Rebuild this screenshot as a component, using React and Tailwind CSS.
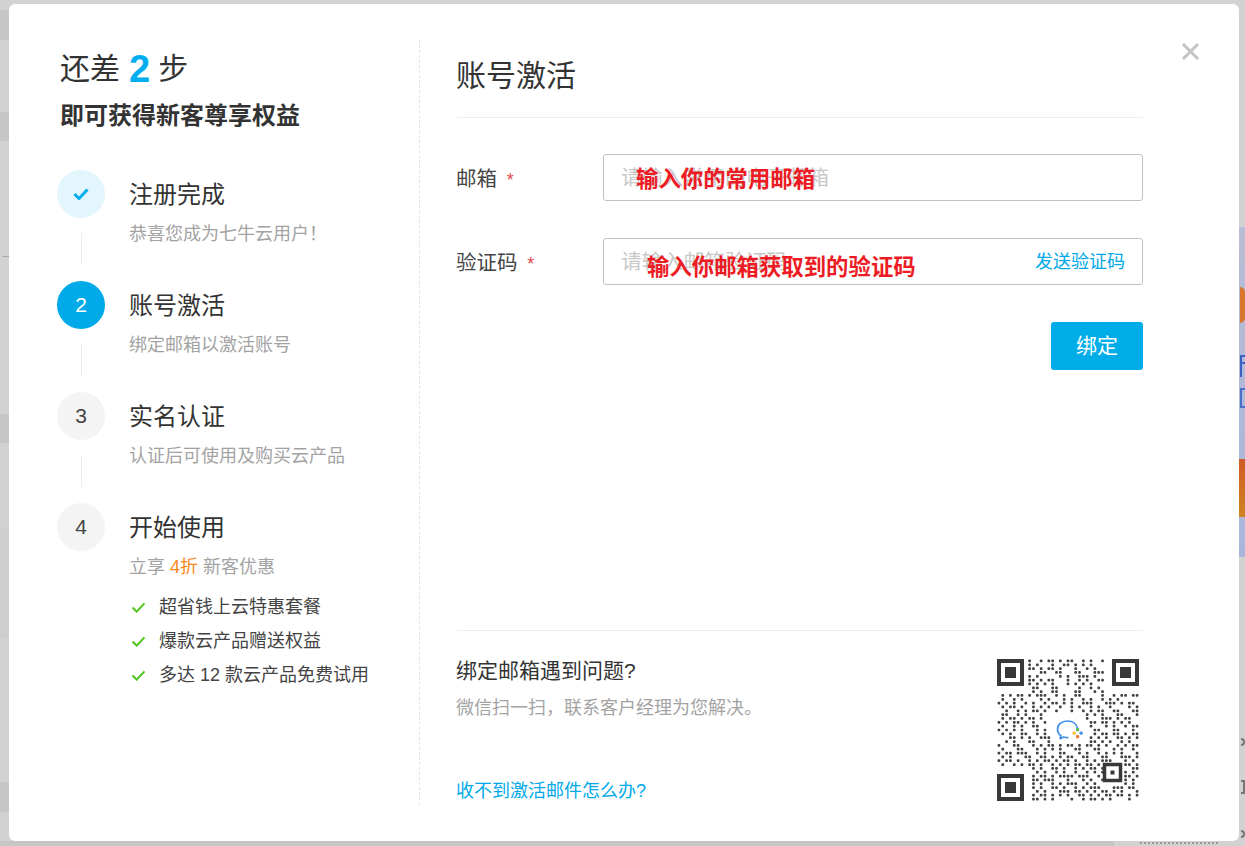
const QR_ROWS = [
  '........#.##.####.##..#.##.#.........',
  '........#.#...#..##.###.#.#..........',
  '........##.#.##.#...#.##.#.#.........',
  '........#..###.##.#.##.#.###.........',
  '........#.#.....#.##.###.#...........',
  '........##.#.##...#..#.#..##.........',
  '........#.#.#.#.#.#.#.#.#.#..........',
  '.........##.#.##.#...##.#.##.........',
  '........##.#.###..#.##.#.#.#.........',
  '.#.#.##.#####.##.#.###..#..#.##.##.##',
  '.#..#.#...##.#.#.#.##.#.##.#.#.#...#.',
  '#.#.#.##.#.##.####.#.####.#.###.#.###',
  '.#.##.#..#.#.#..#..#.##.#.##.#..#.#.#',
  '..##.#.####.##.#...#..#.#.###.##.#.##',
  '.##.##.#.#.#.........#.###.#.#.##.#.#',
  '.#.##.#.##.#.........###.#.###.#.##..',
  '#.#.##.#.#.##........#..##.##.#.#.#.#',
  '.##.#.##.##.#.........#.#..##.#.##.##',
  '#.#.#.#...#.#.........##.##.#.##.#.#.',
  '.#.##.##.##.#.........#.##.##.##.#.##',
  '#..##.#.#.####.......##.#.#.#..##.#.#',
  '.##.#.#.##.#.##.#.##.##.##.#.#.##.#..',
  '#.#.##.#.#.####.#.##.#.##.###..#.#.##',
  '.#.#.##.#.#.###.#.#.##.#.##.#.#.##.#.',
  '#.##.###.##.#.#.##.#.#.##.#.###.#.#.#',
  '.#.#.#.##.###.#.#.###.##.#.##.#.###.#',
  '#.##.##.#.#.##.#.##.##.#.#####.#.#.##',
  '.#..#.#.##.##.#.#.#.##.##.#.#.##.##.#',
  '.........#.#.###.##.#.#.##.#.....#.##',
  '.........##.#.##.#.##..#.#.#.....#.#.',
  '.........#.##.#.####.###.##......##.#',
  '.........##.###.#.#...#.#.##.....#.##',
  '.........#.##.#.#.###.##.#.#.....#.#.',
  '.........#.#.###.#..#.#.###.#.###.##.',
  '.........##.#.#.###.##.#.#.##.#.#.#.#',
  '.........#.##.#.#.#.###.#.#.##.##.#.#',
  '.........##.#.#.#..#.##.##.#.#.#..#.#',
]

function QrCode() {
  const m = 142 / 37
  const dots = []
  QR_ROWS.forEach((row, y) => {
    row.split('').forEach((c, x) => {
      // keep the middle clear for the logo, thin the rest a little
      const inLogo = x >= 14 && x <= 22 && y >= 14 && y <= 21
      const thin = (x * 7 + y * 13) % 5 === 0
      if (c === '#' && !inLogo && !thin) {
        dots.push(<rect key={`${x}-${y}`} x={x * m + 0.55} y={y * m + 0.55} width={m - 1.1} height={m - 1.1} rx="1" fill="#404040" />)
      }
    })
  })
  const finders = [[0, 0], [142 - 27, 0], [0, 142 - 27]]
  return (
    <svg width="142" height="142" viewBox="0 0 142 142" className="block">
      {dots}
      {finders.map(([x, y]) => (
        <g key={`${x}-${y}`}>
          <rect x={x + 2} y={y + 2} width="23" height="23" fill="none" stroke="#383838" strokeWidth="4" />
          <rect x={x + 8} y={y + 8} width="11" height="11" fill="#383838" />
        </g>
      ))}
      <rect x="107.5" y="105.5" width="16" height="16" fill="#fff" stroke="#383838" strokeWidth="3.5" />
      <rect x="113.5" y="111.5" width="4" height="4" fill="#383838" />
      {/* chat logo */}
      <path d="M81 70.5c-1-5.5-5.5-8.5-10.5-8.5-6 0-10 3.7-10 8.5 0 2.6 1.3 4.7 3.3 6.2l-.6 3 3.4-1.7c1.3.4 2.6.6 4.1.6" fill="none" stroke="#3f8fe8" strokeWidth="1.7" strokeLinecap="round" strokeLinejoin="round" />
      <rect x="75.5" y="72.5" width="3.2" height="3.2" rx="1" fill="#f5c33b" />
      <rect x="79" y="69" width="3.2" height="3.2" rx="1" fill="#5cb85c" />
      <rect x="82.5" y="72.5" width="3.2" height="3.2" rx="1" fill="#4a90e2" />
      <rect x="79" y="76" width="3.2" height="3.2" rx="1" fill="#ee7b3c" />
    </svg>
  )
}

function Check({ color, width = 16, height = 12, weight = 2.2 }) {
  return (
    <svg width={width} height={height} viewBox="0 0 16 12" fill="none">
      <path d="M1.5 6l4.5 4.5L14.5 1.5" stroke={color} strokeWidth={weight} />
    </svg>
  )
}

function Step({ badge, badgeClass, title, desc, line = true, children }) {
  return (
    <div className="flex">
      <div className="w-[48px] mr-[24px] shrink-0 flex flex-col items-center">
        <div className={`w-[48px] h-[48px] rounded-full flex items-center justify-center text-[21px] ${badgeClass}`}>{badge}</div>
        {line && <div className="w-px h-[32px] mt-[15px] mb-[16px] bg-[#ececec]" />}
      </div>
      <div>
        <div className="text-[24px] leading-[50px] text-[#333]">{title}</div>
        <div className="-mt-px text-[18px] leading-[30px] text-[#a3a3a3]">{desc}</div>
        {children}
      </div>
    </div>
  )
}

function Field({ label, placeholder, note, noteClass, action, className }) {
  return (
    <div className={`flex items-center ${className}`}>
      <label className="w-[146px] shrink-0 -ml-px mr-px pt-[3px] text-[20.5px] text-[#444]">
        {label} <span className="text-[#e5484d] text-[18px] ml-[4px]">*</span>
      </label>
      <div className="relative flex-1 h-[47px] border border-[#c2c2c2] rounded-[3px] flex items-center pl-[17px] pr-[17px]">
        <input placeholder={placeholder} className="flex-1 min-w-0 outline-none text-[20.8px] placeholder:text-[#c8c8c8]" />
        {action && <span className="pt-px text-[18px] text-[#00a9e8]">{action}</span>}
        <span className={`absolute text-[22.4px] leading-[32px] font-bold text-[#ed1c24] ${noteClass}`}>{note}</span>
      </div>
    </div>
  )
}

export default function App() {
  return (
    <div className="relative h-[846px] w-[1245px] overflow-hidden bg-[#d2d2d2] pt-[4px] pl-[9px] font-['Liberation_Sans','Noto_Sans_CJK_SC',sans-serif]">
      {/* page behind the overlay, only its edges show */}
      <div className="absolute left-0 top-[10px] w-[9px] h-[30px] bg-[#c6c6c6]" />
      <div className="absolute left-0 top-[112px] w-[9px] h-[29px] bg-[#c6c6c6]" />
      <div className="absolute left-[2px] top-[256px] w-[7px] h-px bg-[#a8a8a8]" />
      <div className="absolute left-0 top-[414px] w-[9px] h-[29px] bg-[#c6c6c6]" />
      <div className="absolute left-0 top-[528px] w-[9px] h-[110px] bg-[#cecece]" />
      <div className="absolute left-0 top-[782px] w-[9px] h-[30px] bg-[#c6c6c6]" />
      <div className="absolute right-0 top-[227px] w-[6px] h-[330px] bg-gradient-to-b from-[#b7bdd4] to-[#a9b6dc]" />
      <div className="absolute right-0 top-[287px] w-[5px] h-[36px] rounded-r-full bg-[#d9772f]" />
      <div className="absolute right-0 top-[355px] w-[5px] h-[2px] bg-[#3d62c4]" />
      <div className="absolute right-0 top-[362px] w-[5px] h-[2px] bg-[#3d62c4]" />
      <div className="absolute right-[3px] top-[355px] w-[2px] h-[22px] bg-[#3d62c4]" />
      <div className="absolute right-0 top-[388px] w-[5px] h-[2px] bg-[#4a6fc8]" />
      <div className="absolute right-[3px] top-[388px] w-[2px] h-[20px] bg-[#4a6fc8]" />
      <div className="absolute right-0 top-[406px] w-[5px] h-[2px] bg-[#4a6fc8]" />
      <div className="absolute right-0 top-[459px] w-[6px] h-[58px] bg-gradient-to-b from-[#cf5a25] to-[#d08420]" />
      <div className="absolute right-0 top-[738px] w-[4px] h-[8px] rounded-r-full border-2 border-l-0 border-[#777]" />
      <div className="absolute right-0 top-[780px] w-[4px] h-[14px] border-2 border-l-0 border-[#777]" />
      <div className="absolute right-0 top-[830px] w-[4px] h-[8px] rounded-r-full border-2 border-l-0 border-[#777]" />
      <div className="absolute left-0 top-[841px] w-[1114px] h-[5px] bg-[#c6c6c6]" />
      <div className="absolute left-[1140px] top-[842px] w-[78px] border-t-2 border-dotted border-[#999]" />

      <div className="relative w-[1230px] h-[837px] bg-white rounded-[6px] flex pt-[36px] pl-[48px]">
        <div className="w-[363px] h-[765px] border-r border-dashed border-[#e4e4e4]">
          <div className="pl-[3px] pt-px text-[30px] leading-[56px] text-[#333] flex items-center">
            还差<span className="ml-[9px] mr-[8px] text-[38px] font-bold text-[#00aeef]">2</span>步
          </div>
          <div className="pl-[3px] mt-px text-[24px] leading-[36px] font-bold text-[#333]">即可获得新客尊享权益</div>
          <div className="mt-[36px]">
            <Step badge={<Check color="#00aeef" weight={3} />} badgeClass="bg-[#e3f5fd]" title="注册完成" desc={'恭喜您成为七牛云用户\uFF01'} />
            <Step badge="2" badgeClass="bg-[#00a9e8] text-white" title="账号激活" desc="绑定邮箱以激活账号" />
            <Step badge="3" badgeClass="bg-[#f4f4f4] text-[#444]" title="实名认证" desc="认证后可使用及购买云产品" />
            <Step badge="4" badgeClass="bg-[#f4f4f4] text-[#444]" title="开始使用" line={false}
              desc={<>立享 <span className="text-[#f7891e]">4折</span> 新客优惠</>}>
              <ul className="mt-[8px] text-[18px] leading-[34px] text-[#444]">
                {['超省钱上云特惠套餐', '爆款云产品赠送权益', '多达 12 款云产品免费试用'].map(t => (
                  <li key={t} className="flex items-center">
                    <span className="w-[30px] pl-[2px]"><Check color="#4fc41a" width={15} height={11} /></span>{t}
                  </li>
                ))}
              </ul>
            </Step>
          </div>
        </div>

        <div className="w-[686px] ml-[37px] h-[765px] flex flex-col">
          <h1 className="text-[30px] leading-[72px] text-[#333] h-[78px] border-b border-[#eeeeee] -indent-px">账号激活</h1>
          <Field className="mt-[36px]" label="邮箱" placeholder="请输入常用的电子邮箱" note="输入你的常用邮箱" noteClass="left-[32px] top-[9px]" />
          <Field className="mt-[37px]" label="验证码" placeholder="请输入邮箱验证码" note="输入你邮箱获取到的验证码" noteClass="left-[43px] top-[13px]" action="发送验证码" />
          <button className="self-end mt-[37px] w-[92px] h-[48px] rounded-[3px] bg-[#00ade9] text-white text-[21px]">绑定</button>
          <div className="mt-auto border-t border-[#eeeeee] pt-[23px] pb-[4px] flex justify-between">
            <div className="flex flex-col -ml-px">
              <div className="mt-[2px] text-[21px] leading-[30px] text-[#333]">绑定邮箱遇到问题?</div>
              <div className="mt-[7px] text-[18px] leading-[30px] text-[#a3a3a3]">{'微信扫一扫\uFF0C联系客户经理为您解决。'}</div>
              <a className="mt-auto text-[18px] leading-[30px] text-[#00a9e8] -mb-[5px]">收不到激活邮件怎么办?</a>
            </div>
            <div className="mr-[4px] mt-[5px]"><QrCode /></div>
          </div>
        </div>

        <button className="absolute left-[1172px] top-[38px] text-[#c4c4c4]">
          <svg width="19" height="19" viewBox="0 0 19 19" className="block" fill="none">
            <path d="M2 2l15 15M17 2L2 17" stroke="currentColor" strokeWidth="3" />
          </svg>
        </button>
      </div>
    </div>
  )
}
